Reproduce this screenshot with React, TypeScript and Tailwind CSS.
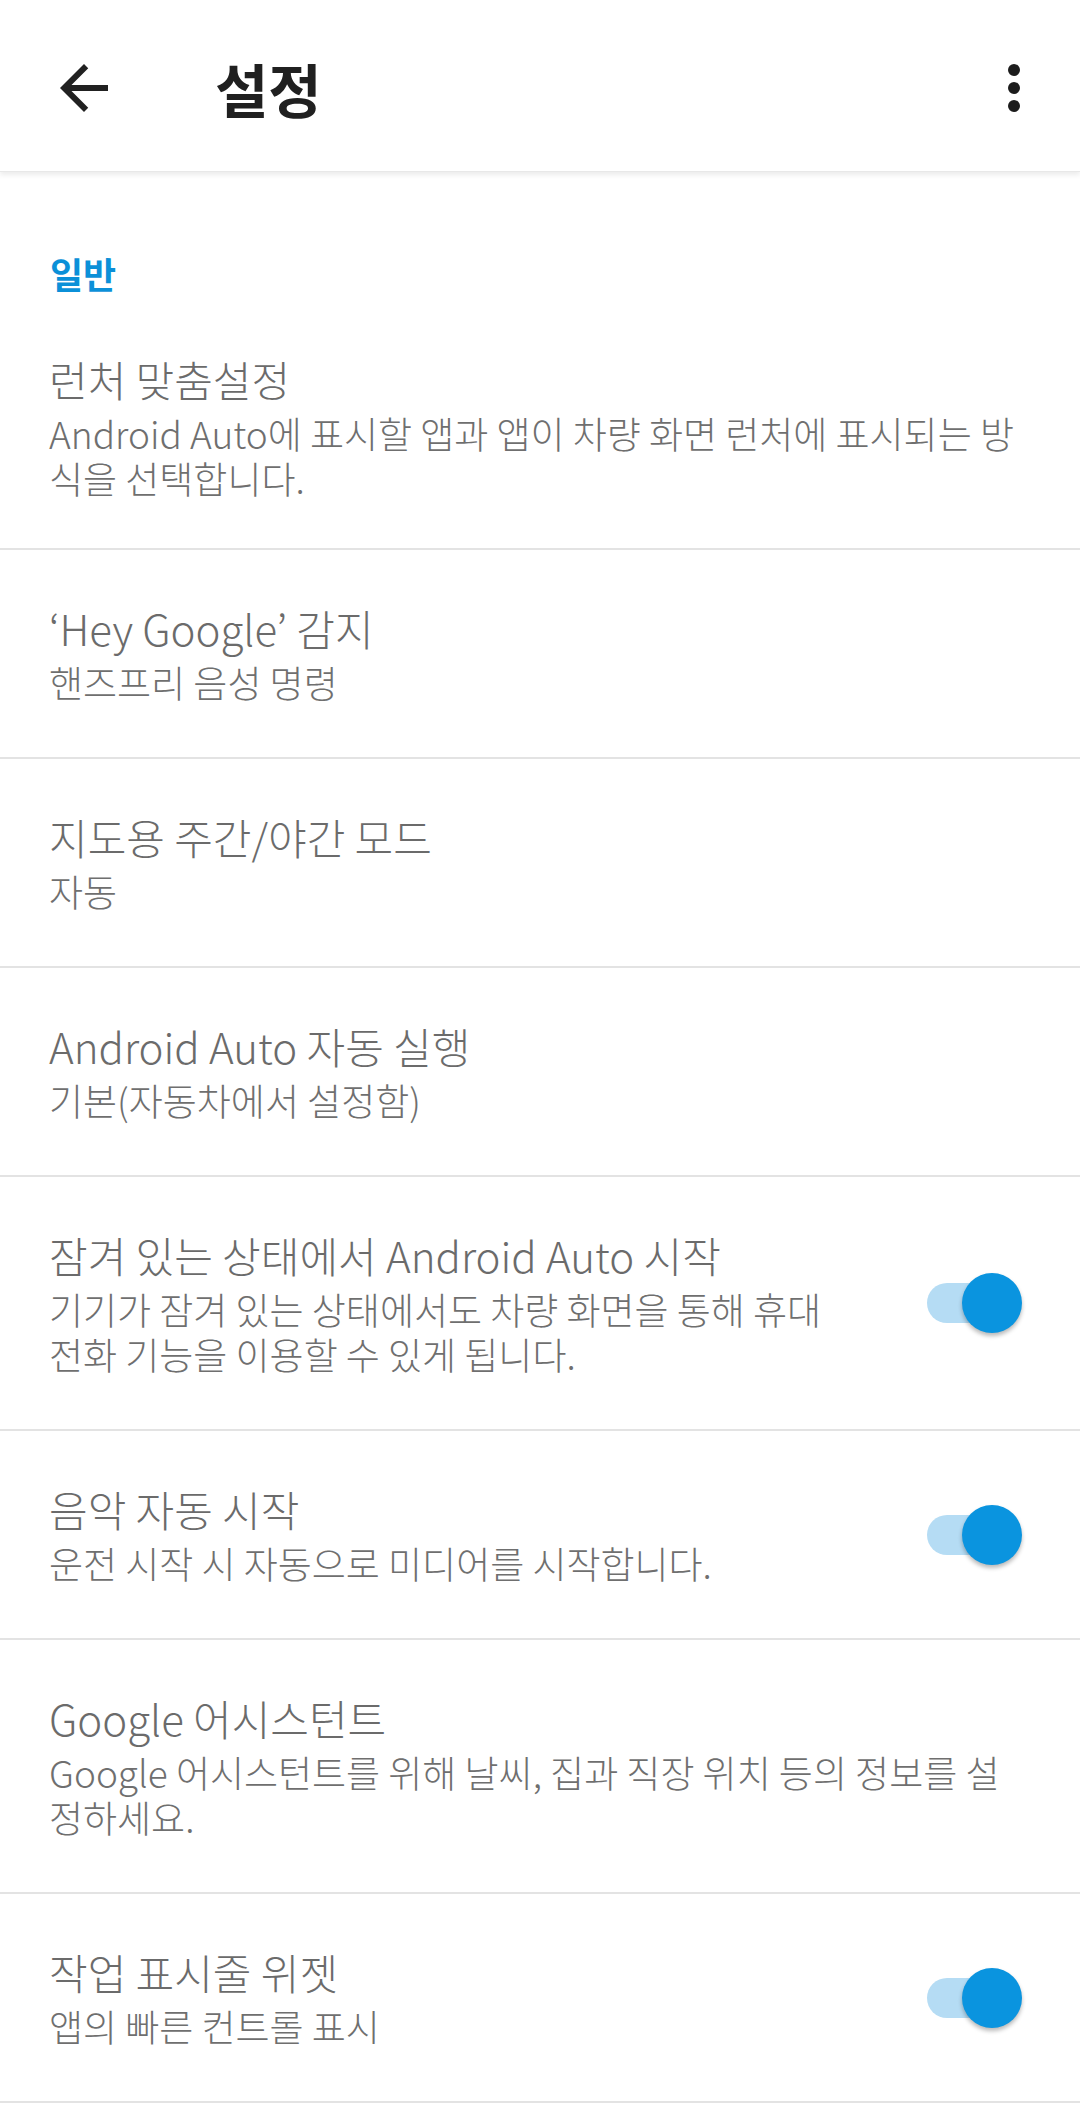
import React from "react";

type Row = {
  title: string;
  lines: string[];
  toggle?: boolean;
};

const rows: Row[] = [
  {
    title: "런처 맞춤설정",
    lines: ["Android Auto에 표시할 앱과 앱이 차량 화면 런처에 표시되는 방", "식을 선택합니다."],
  },
  { title: "‘Hey Google’ 감지", lines: ["핸즈프리 음성 명령"] },
  { title: "지도용 주간/야간 모드", lines: ["자동"] },
  { title: "Android Auto 자동 실행", lines: ["기본(자동차에서 설정함)"] },
  {
    title: "잠겨 있는 상태에서 Android Auto 시작",
    lines: ["기기가 잠겨 있는 상태에서도 차량 화면을 통해 휴대", "전화 기능을 이용할 수 있게 됩니다."],
    toggle: true,
  },
  { title: "음악 자동 시작", lines: ["운전 시작 시 자동으로 미디어를 시작합니다."], toggle: true },
  {
    title: "Google 어시스턴트",
    lines: ["Google 어시스턴트를 위해 날씨, 집과 직장 위치 등의 정보를 설", "정하세요."],
  },
  { title: "작업 표시줄 위젯", lines: ["앱의 빠른 컨트롤 표시"], toggle: true },
];

function Toggle() {
  return (
    <div className="relative w-[95px] h-[60px] shrink-0">
      <div className="absolute left-0 top-[10px] w-[86px] h-[40px] rounded-full bg-[#b5dcf4]" />
      <div className="absolute right-0 top-0 w-[60px] h-[60px] rounded-full bg-[#0a94df] shadow-[0_3px_4px_rgba(0,0,0,0.28)]" />
    </div>
  );
}

function SettingRow({ row, first }: { row: Row; first?: boolean }) {
  return (
    <div
      className={
        "flex items-center justify-between pl-[49px] pr-[58px] border-b-2 border-[#e3e3e3] " +
        (first ? "pt-[52px] pb-[47px]" : "py-[52px]")
      }
    >
      <div className="flex flex-col">
        <div className="text-[42px] leading-[52px] font-light text-[#6b6b6b] whitespace-nowrap">{row.title}</div>
        {/* description keeps the device's line breaks */}
        <p className="mt-[6px] text-[37px] leading-[45px] font-light text-[#6f6f6f] whitespace-nowrap">
          {row.lines.map((line, i) => (
            <React.Fragment key={i}>
              {i > 0 && <br />}
              {line}
            </React.Fragment>
          ))}
        </p>
      </div>
      {row.toggle && <Toggle />}
    </div>
  );
}

export default function App() {
  return (
    <div className="min-h-screen bg-white font-['Noto_Sans_CJK_KR','Noto_Sans',sans-serif]">
      {/* Toolbar */}
      <header className="relative z-10 h-[172px] pt-[4px] flex items-center bg-white border-b border-[#e8e8e8] shadow-[0_3px_5px_rgba(0,0,0,0.08)]">
        <svg viewBox="0 0 24 24" className="ml-[48px] w-[72px] h-[72px] shrink-0" fill="#212121">
          <path d="M20 11H7.83l5.59-5.59L12 4l-8 8 8 8 1.41-1.41L7.83 13H20v-2z" />
        </svg>
        <h1 className="ml-[95px] text-[58px] font-bold text-[#202020] leading-none">설정</h1>
        <svg viewBox="0 0 24 24" className="ml-auto mr-[30px] w-[72px] h-[72px] shrink-0" fill="#1c1c1c">
          <circle cx="12" cy="6" r="2" />
          <circle cx="12" cy="12" r="2" />
          <circle cx="12" cy="18" r="2" />
        </svg>
      </header>

      {/* Section */}
      <div className="pl-[50px] pt-[78px] pb-[5px]">
        <div className="text-[36px] leading-[46px] font-bold text-[#0b90d8]">일반</div>
      </div>

      {rows.map((row, i) => (
        <SettingRow key={i} row={row} first={i === 0} />
      ))}
    </div>
  );
}
